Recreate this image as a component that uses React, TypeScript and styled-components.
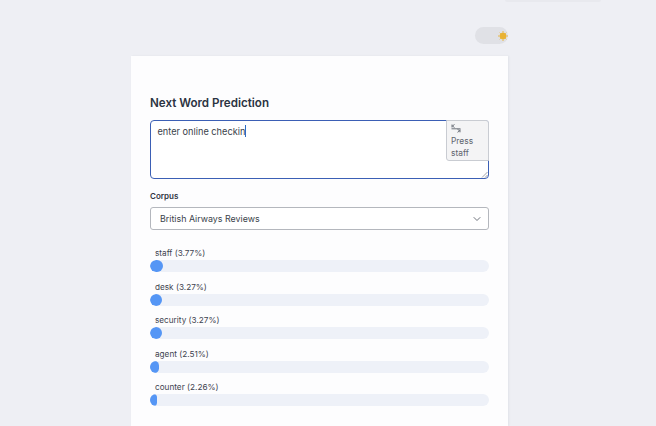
import styled, { createGlobalStyle } from 'styled-components'
import { ChevronDown } from 'lucide-react'

const predictions = [
  { word: 'staff', pct: '3.77', fill: 12.5 },
  { word: 'desk', pct: '3.27', fill: 12 },
  { word: 'security', pct: '3.27', fill: 12 },
  { word: 'agent', pct: '2.51', fill: 8.5 },
  { word: 'counter', pct: '2.26', fill: 7 },
]

const GlobalStyle = createGlobalStyle`
  html, body {
    margin: 0;
    height: 100%;
    overflow: hidden;
    background: #eeeff4;
    font-family: Inter, "Liberation Sans", sans-serif;
  }
`

const Page = styled.div`
  width: 656px;
  height: 426px;
  overflow: hidden;
  display: flex;
  flex-direction: column;
`

const TopEdge = styled.div`
  flex: none;
  align-self: flex-end;
  width: 96px;
  height: 2px;
  margin-right: 55px;
  background: #e8e9ee;
  border-radius: 0 0 6px 6px;
`

const Column = styled.div`
  width: 377px;
  margin: 25px 0 0 131px;
  display: flex;
  flex-direction: column;
  align-items: flex-end;
`

const ThemeToggle = styled.div`
  width: 33px;
  height: 17px;
  border-radius: 9px;
  background: #e0e1e6;
  display: flex;
  align-items: center;
  justify-content: flex-end;
  padding-right: 0.5px;
  box-sizing: border-box;
  margin-bottom: 12px;
`

const SunIcon = styled.svg`
  width: 10px;
  height: 10px;
`

const Card = styled.div`
  align-self: stretch;
  height: 370px;
  background: #fdfdfe;
  box-shadow: 1px 0 2px rgba(60, 64, 90, 0.07);
  padding: 38px 19px 0;
  box-sizing: border-box;
`

const Title = styled.h2`
  margin: 0 0 8px;
  font-size: 11.6px;
  line-height: 18px;
  font-weight: 600;
  color: #2b3342;
`

const PromptBox = styled.div`
  position: relative;
  height: 59px;
  box-sizing: border-box;
  border: 1.5px solid #3b5fb5;
  border-radius: 4px;
  padding: 4px 6.5px;
  font-size: 9.2px;
  line-height: 14px;
  color: #3a3f4a;
  background: #fff;
`

const Caret = styled.span`
  display: inline-block;
  width: 1px;
  height: 12px;
  background: #2c6cc4;
  vertical-align: -2px;
`

const Hint = styled.div`
  position: absolute;
  top: -1px;
  right: -1px;
  width: 43px;
  height: 41px;
  box-sizing: border-box;
  padding: 3px 4px 0;
  background: #f4f4f5;
  border: 1px solid #c9ccd2;
  border-radius: 0 3px 0 3px;
  font-size: 8.4px;
  line-height: 12px;
  color: #5f646e;
`

const HintIcon = styled.svg`
  display: block;
  width: 10px;
  height: 9px;
  margin-bottom: 2px;
`

const ResizeGrip = styled.svg`
  position: absolute;
  right: 0;
  bottom: 0;
  width: 7px;
  height: 7px;
`

const FieldLabel = styled.div`
  margin-top: 11px;
  font-size: 8px;
  line-height: 12px;
  font-weight: 600;
  color: #2f3542;
`

const Select = styled.div`
  height: 23px;
  margin-top: 5px;
  box-sizing: border-box;
  border: 1px solid #b4b7bd;
  border-radius: 3px;
  padding: 0 5px 0 9px;
  display: flex;
  align-items: center;
  justify-content: space-between;
  font-size: 8.9px;
  color: #3a3f4a;
  background: #fff;
`

const Predictions = styled.div`
  margin-top: 16px;
  display: flex;
  flex-direction: column;
  gap: 7.5px;
`

const PredictionLabel = styled.div`
  padding-left: 5px;
  font-size: 8.2px;
  line-height: 14px;
  color: #3f4450;
`

const Track = styled.div`
  height: 12px;
  border-radius: 6px;
  background: #eef1f8;
  overflow: hidden;
`

const Fill = styled.div`
  height: 100%;
  border-radius: 6px;
  background: #5596f5;
`

export default function App() {
  return (
    <Page>
      <GlobalStyle />
      <TopEdge />
      <Column>
        <ThemeToggle>
          <SunIcon viewBox="0 0 10 10" fill="#e9b233" stroke="#e9b233">
            <circle cx="5" cy="5" r="3.2" strokeWidth="0.4" />
            <path strokeWidth="0.9" d="M5 0v1.5M5 8.5V10M0 5h1.5M8.5 5H10M1.7 1.7l1 1M7.3 7.3l1 1M1.7 8.3l1-1M7.3 2.7l1-1" />
          </SunIcon>
        </ThemeToggle>
        <Card>
          <Title>Next Word Prediction</Title>
          <PromptBox>
            enter online checkin<Caret />
            <Hint>
              <HintIcon viewBox="0 0 10 9" fill="none" stroke="#5f646e" strokeWidth="0.9">
                <path d="M1 .5v3M3.5.5L1.4 2 3.5 3.5M.5 4.8h9M6.5 5.3l2.2 1.5-2.2 1.5M9 5.3v3" />
              </HintIcon>
              Press
              <br />
              staff
            </Hint>
            <ResizeGrip viewBox="0 0 7 7" stroke="#8a8d94" strokeWidth="0.8">
              <path d="M1 6.5L6.5 1M4 6.5L6.5 4" />
            </ResizeGrip>
          </PromptBox>
          <FieldLabel>Corpus</FieldLabel>
          <Select>
            British Airways Reviews
            <ChevronDown size={12} color="#4a4f5a" strokeWidth={1.6} />
          </Select>
          <Predictions>
            {predictions.map(p => (
              <div key={p.word}>
                <PredictionLabel>
                  {p.word} ({p.pct}%)
                </PredictionLabel>
                <Track>
                  <Fill style={{ width: p.fill }} />
                </Track>
              </div>
            ))}
          </Predictions>
        </Card>
      </Column>
    </Page>
  )
}
